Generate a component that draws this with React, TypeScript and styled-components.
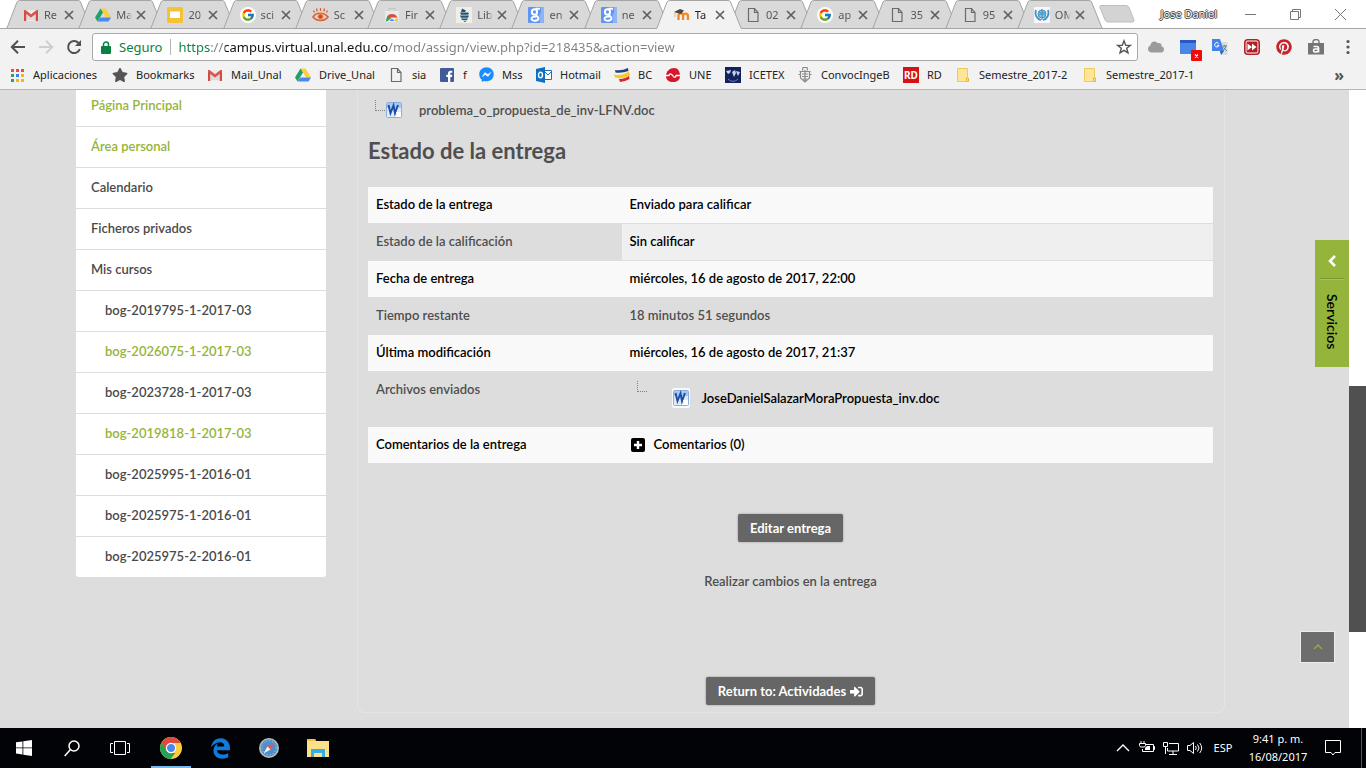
import React from "react";
import styled, { createGlobalStyle } from "styled-components";
import { FcGoogle } from "react-icons/fc";
import { FaCloud, FaFacebookMessenger, FaPinterest, FaSignInAlt, FaStar } from "react-icons/fa";
import { FaEdgeLegacy } from "react-icons/fa6";

const uiFont = `"Noto Sans", "Open Sans", sans-serif`;
const siteFont = `Lato, "Noto Sans", sans-serif`;

const GlobalStyle = createGlobalStyle`
  * { box-sizing: border-box; }
  body { margin: 0; background: #dddddd; font-family: ${uiFont}; }
  button { border: 0; padding: 0; background: none; font: inherit; color: inherit; cursor: pointer; }
  a { color: inherit; text-decoration: none; }
  ul { list-style: none; margin: 0; padding: 0; }
  svg { display: block; flex: none; }
`;

/* ---------- icons ---------- */

const Gmail = ({ s = 16 }: { s?: number }) => (
  <svg width={s} height={s} viewBox="0 0 16 16">
    <path d="M1 3h14v11H1z" fill="#eceaea" />
    <path d="M3 13V6l5 4 5-4v7z" fill="#dcdada" />
    <path d="M1 14V3.600L8 9l7-5.400V14h-2.200V6.800L8 10.600 3.200 6.800V14z" fill="#d64a3f" />
    <path d="M1 3h1.500L8 7.200 13.500 3H15v1.500L8 10 1 4.500z" fill="#d9564b" />
  </svg>
);

const Drive = () => (
  <svg width="16" height="16" viewBox="0 0 16 16">
    <path d="M5.500 1.500h5L16 10.500h-5z" fill="#fccd3d" />
    <path d="M5.500 1.500L0 10.500l2.500 4L8 5.600z" fill="#21a165" />
    <path d="M5.300 10.500H16l-2.500 4h-11z" fill="#4a87ee" />
  </svg>
);

const Slides = () => (
  <svg width="16" height="16" viewBox="0 0 16 16">
    <rect width="16" height="16" rx="1.500" fill="#f5c235" />
    <rect x="3" y="4.500" width="10" height="6.500" fill="#fff" />
  </svg>
);

const GoogleIcon = () => (
  <svg width="16" height="16" viewBox="0 0 16 16">
    <circle cx="8" cy="8" r="8" fill="#fff" />
    <FcGoogle x={1} y={1} width={14} height={14} size={14} />
  </svg>
);

const Eye = () => (
  <svg width="17" height="16" viewBox="0 0 17 16" fill="none" stroke="#d9603b">
    <path d="M1 10c3-5 11-5 15 0-3 4-11 5-15 0z" strokeWidth="1.600" />
    <circle cx="8.500" cy="9.500" r="2.600" fill="#d0492b" stroke="#f2a33c" />
    <path d="M2.500 5.500L1.500 3.500M5.200 4.500L4.500 1.500M8.500 4V1M11.800 4.500l.7-3M14.500 5.500l1-2" strokeWidth="1.300" />
  </svg>
);

const WebStore = () => (
  <svg width="16" height="16" viewBox="0 0 16 16">
    <path d="M5 4V1.500h6V4" fill="none" stroke="#c4c4c4" />
    <path d="M1 4h14v10.500H1z" fill="#e9e9e9" />
    <path d="M2 14.500a6 6 0 0 1 3-5.800L8 12z" fill="#36a852" />
    <path d="M2.600 10.500a6 6 0 0 1 10.800 0z" fill="#dd4b3e" />
    <path d="M13.400 10.500a6 6 0 0 1 .6 4H9z" fill="#fbc831" />
    <path d="M5.200 14.500a2.800 2.800 0 0 1 5.600 0z" fill="#4a87ee" stroke="#fff" strokeWidth=".8" />
  </svg>
);

const Lib = () => (
  <svg width="16" height="16" viewBox="0 0 16 16">
    <rect width="16" height="16" fill="#eef0e6" />
    <path d="M6 1.500l4 2-1 1.500H5zM4 5.500h8l1 1-1 1.200H5zM4 8.500h9l-1 2.200H5zM5 11.500h7l-1 1.500H6zM7 13.700h4l-2 1.300z" fill="#28527e" />
  </svg>
);

const OldGoogle = () => (
  <svg width="16" height="16" viewBox="0 0 16 16">
    <rect width="16" height="16" rx="1" fill="#6095f3" />
    <path d="M13 0v6c-2 1-2 3-1 5v5h2q2 0 2-2V0z" fill="#8fb4f8" />
    <ellipse cx="6.500" cy="5" rx="2.600" ry="2.800" fill="none" stroke="#fff" strokeWidth="2" />
    <path d="M7.500 1.800h4.500M8.200 7.500c-.6 1.500 2.300 1.800 2.300 3.800 0 3.200-7 3.200-7 .4 0-2 3-2.300 5-2" fill="none" stroke="#fff" strokeWidth="1.900" />
  </svg>
);

const Moodle = () => (
  <svg width="17" height="16" viewBox="0 0 17 16" fill="none">
    <path d="M5.500 13V8.500a2.300 2.300 0 0 1 4.600 0V13M10.100 9a2.300 2.300 0 0 1 4.800 0v4" stroke="#f08a2c" strokeWidth="2.400" />
    <path d="M1 5l6-3 4 1.500-3 3.500-4-1z" fill="#4a4744" />
    <path d="M2 5v5" stroke="#d9b27c" />
  </svg>
);

const Page = () => (
  <svg width="16" height="16" viewBox="0 0 16 16" fill="none" stroke="#6b6b6b" strokeWidth="1.200">
    <path d="M3.500 1.500h6l3.500 4v9H3.500z" />
    <path d="M9.500 1.500v4H13" />
  </svg>
);

const Who = () => (
  <svg width="16" height="16" viewBox="0 0 16 16" fill="none" stroke="#3e93c4">
    <rect width="16" height="16" fill="#f7f7f7" stroke="none" />
    <circle cx="8" cy="7" r="4" fill="#8fc3e0" />
    <path d="M8 2v11M5 5l6 3M5 8l6-3" />
    <path d="M2 3c-1.500 5 1 9 5 10M14 3c1.500 5-1 9-5 10" strokeWidth="1.800" />
  </svg>
);

const Apps = () => (
  <svg width="16" height="16" viewBox="0 0 16 16">
    {["#ef4a3c", "#ef4a3c", "#ef4a3c", "#2f9e5a", "#3c80e8", "#f3b51c", "#2f9e5a", "#f3b51c", "#f3b51c"].map((c, i) => (
      <rect key={i} x={2 + (i % 3) * 5} y={2 + Math.floor(i / 3) * 5} width="3" height="3" fill={c} />
    ))}
  </svg>
);

const Facebook = () => (
  <svg width="16" height="16" viewBox="0 0 16 16">
    <rect x="1" y="1" width="14" height="14" rx="1" fill="#3f5b9a" />
    <path d="M9 15V10H7.300V7.800H9V6.400C9 4.600 10 3.700 11.700 3.700h1.600v2.100h-1.100c-.7 0-.9.300-.9.900v1.100h2l-.3 2.200h-1.700v5z" fill="#fff" />
  </svg>
);

const Outlook = () => (
  <svg width="16" height="16" viewBox="0 0 16 16">
    <path d="M8 3.500h7.500v9H8z" fill="#fff" stroke="#1272c4" />
    <path d="M9 5l3 3 3.500-3.500" fill="none" stroke="#1272c4" />
    <path d="M0 2l9-2v16l-9-2z" fill="#0f6fc2" />
    <ellipse cx="4.500" cy="8" rx="2" ry="2.700" fill="none" stroke="#fff" strokeWidth="1.400" />
  </svg>
);

const Flag = () => (
  <svg width="16" height="16" viewBox="0 0 16 16">
    <path d="M1 3q7 1 13-2l.5 3Q8 6.500 1.500 5.500z" fill="#24407f" />
    <path d="M0 7.500q7 2 15-3l1 4q-8 4-15 2z" fill="#fcc81e" />
    <path d="M5 12q6 0 10-3l.5 3q-5 3-9.500 3z" fill="#d6262f" />
  </svg>
);

const Une = () => (
  <svg width="16" height="16" viewBox="0 0 16 16">
    <path d="M1 9c0-5 4-8 8-8 5 0 6 5 6 8 0 4-3 6-7 6s-7-2-7-6z" fill="#d71729" />
    <path d="M0 8.500h4c1-3 3-1 4 .5s3 2 3-.5h4" fill="none" stroke="#fff" strokeWidth="1.300" />
  </svg>
);

const Icetex = () => (
  <svg width="16" height="16" viewBox="0 0 16 16">
    <rect width="16" height="16" fill="#12225e" />
    <path d="M1 4l5-1-1 3-2 1zM7 5l3-2 1 3-2 4zM11 4l4 1-2 4-1-2z" fill="#c9d2ea" />
    <path d="M3 12c3 3 7 3 10 0" stroke="#7182bb" fill="none" />
  </svg>
);

const Crest = () => (
  <svg width="16" height="16" viewBox="0 0 16 16" fill="none" stroke="#8a8a8a">
    <path d="M5.500 3.500L6 .5h4l.5 3M2.500 4.500h11M3.500 5v6L8 15l4.500-4V5M5 7h6M5 9.500h6M6 12h4M8 3v12M1.500 7.500h2M12.500 7.500h2" strokeWidth="1.200" />
  </svg>
);

const Folder = () => (
  <svg width="16" height="16" viewBox="0 0 16 16">
    <path d="M2.500 1.500h10v13h-10z" fill="#ffe596" stroke="#eccb5a" />
    <path d="M11.500 11h2v3.500h-2z" fill="#ffe596" stroke="#e4b93b" />
  </svg>
);

const Rd = styled.span`
  width: 16px;
  height: 16px;
  background: #d31414;
  color: #fff;
  font: 700 10px/16px ${uiFont};
  text-align: center;
`;

const WordDoc = () => (
  <svg width="16" height="16" viewBox="0 0 16 16">
    <rect x=".5" y=".5" width="15" height="15" rx="1" fill="#dfeafb" stroke="#8aaee0" />
    <path d="M1 1h14v5H1z" fill="#a9c8f2" />
    <path d="M2.500 3l2 8 3-7.500 1.500 7.500 3-8" fill="none" stroke="#1d4fa8" strokeWidth="2" />
    <path d="M10 10h5v5H9c3-1 2-3 1-5z" fill="#fff" />
  </svg>
);

const Tree = () => (
  <svg width="11" height="12" viewBox="0 0 11 12" fill="none" stroke="#808080" strokeDasharray="1 1">
    <path d="M.5 0v11M1 10.500h10" />
  </svg>
);

/* ---------- browser chrome ---------- */

const Screen = styled.div`
  display: flex;
  flex-direction: column;
  min-height: 100vh;
`;

const TabStrip = styled.header`
  display: flex;
  align-items: stretch;
  height: 29px;
  padding-left: 6px;
  background: #fff;
  border-bottom: 1px solid #a5a5a5;
`;

const Tabs = styled.div`
  display: flex;
  flex: 0 1 1083px;
`;

const TabButton = styled.button<{ $active?: boolean }>`
  position: relative;
  z-index: ${(p) => (p.$active ? 2 : 1)};
  flex: 1 1 0;
  min-width: 0;
  display: flex;
  align-items: center;
  padding-left: 17px;
  margin-bottom: -1px;
  color: ${(p) => (p.$active ? "#222" : "#555")};
  text-align: left;
`;

const TabShape = styled.svg`
  position: absolute;
  left: 0;
  top: 0;
  z-index: -1;
`;

const TabTitle = styled.span`
  width: 16px;
  margin: 0 4px 0 5px;
  overflow: hidden;
  white-space: nowrap;
  font-size: 11px;
  line-height: 16px;
  mask-image: linear-gradient(90deg, #000 11px, transparent 16px);
`;

const Cross = () => (
  <svg width="10" height="10" viewBox="0 0 10 10" stroke="#5f5f5f" strokeWidth="1.700">
    <path d="M1 1l8 8M9 1L1 9" />
  </svg>
);

const Tab = ({ icon, title, active }: { icon: React.ReactNode; title: string; active?: boolean }) => (
  <TabButton $active={active}>
    <TabShape width="86" height="29" viewBox="0 0 86 29">
      <path d="M0 29L1 28 11 2Q12 .5 13.500 .5H72Q74 .5 74.500 2L85 28 86 29z" fill={active ? "#f2f2f2" : "#d9d9d9"} />
      <path d="M0 28.500L1 28 11 2Q12 .5 13.500 .5H72Q74 .5 74.500 2L85 28 86 28.500" fill="none" stroke="#a5a5a5" />
      {!active && <path d="M0 28.500h86" stroke="#a5a5a5" />}
    </TabShape>
    {icon}
    <TabTitle>{title}</TabTitle>
    <Cross />
  </TabButton>
);

const NewTab = styled.button`
  align-self: center;
  margin-left: 10px;
`;

const WindowControls = styled.div`
  display: flex;
  align-items: center;
  margin-left: auto;
  padding-right: 20px;
  gap: 34px;
`;

const Profile = styled.button`
  color: #fff;
  font-family: "Open Sans", sans-serif;
  font-size: 11px;
  line-height: 16px;
  margin-right: -6px;
  white-space: nowrap;
  text-shadow: 1px 0 #444, -1px 0 #444, 0 1px #444, 0 -1px #444;
`;

const Toolbar = styled.div`
  display: flex;
  align-items: center;
  height: 33px;
  padding: 3px 10px 0;
  background: #f2f2f2;
`;

const NavButtons = styled.div`
  display: flex;
  gap: 12px;
  width: 82px;
`;

const Omnibox = styled.form`
  flex: 1;
  display: flex;
  align-items: center;
  height: 28px;
  padding: 0 5px 0 8px;
  background: #fff;
  border: 1px solid #a9a9a9;
  border-radius: 3px;
`;

const Secure = styled.label`
  display: flex;
  align-items: center;
  gap: 8px;
  color: #0b8043;
  font-size: 13px;
  line-height: 20px;
  padding-right: 8px;
`;

const UrlDivider = styled.span`
  width: 1px;
  height: 16px;
  background: #b5b5b5;
`;

const Url = styled.input`
  flex: 1;
  min-width: 0;
  border: 0;
  outline: 0;
  padding: 0;
  margin-left: 7px;
  height: 24px;
  font: 13px/20px ${uiFont};
  color: #444;
  -webkit-text-fill-color: transparent;
  background: linear-gradient(90deg, #0b8043 33px, #808080 33px 47px, #111 47px 210px, #808080 210px);
  background-clip: text;
`;

const Extensions = styled.div`
  display: flex;
  align-items: center;
  gap: 16px;
  margin-left: 10px;
`;

const BookmarkBar = styled.nav`
  display: flex;
  align-items: center;
  height: 28px;
  padding: 0 22px 2px 9px;
  background: #f2f2f2;
  border-bottom: 1px solid #b6b6b6;
`;

const BookmarkLink = styled.a<{ $w: number }>`
  flex: 0 0 ${(p) => p.$w}px;
  display: flex;
  align-items: center;
  gap: 8px;
  color: #222;
  font-size: 11px;
  line-height: 16px;
  white-space: nowrap;
`;

const More = styled.button`
  margin-left: auto;
  font-size: 16px;
  font-weight: 700;
  line-height: 16px;
  color: #555;
`;

/* ---------- site ---------- */

const Viewport = styled.div`
  flex: 1;
  display: flex;
`;

const Site = styled.div`
  position: relative;
  flex: 1;
  display: flex;
  align-items: flex-start;
  gap: 31px;
  padding: 0 124px 15px 76px;
  overflow: hidden;
  background: #dddddd;
  color: #4f4f4f;
  font: 600 13px/20px ${siteFont};
`;

const SideNav = styled.nav`
  flex: 0 0 250px;
  margin-top: -5px;
  background: #fff;
  border-radius: 0 0 3px 3px;
`;

const SideItem = styled.li<{ $sub?: boolean; $green?: boolean }>`
  height: 41px;
  padding: 9px 15px 0 ${(p) => (p.$sub ? 29 : 15)}px;
  border-top: 1px solid #dddddd;
  color: ${(p) => (p.$green ? "#94b43b" : "#4a4a4a")};
`;

const Panel = styled.main`
  flex: 1;
  min-width: 0;
  padding: 0 11px 7px 10px;
  border: 1px solid #e4e4e4;
  border-top: 0;
  border-radius: 0 0 8px 8px;
  display: flex;
  flex-direction: column;
`;

const FileRow = styled.div`
  display: flex;
  align-items: center;
  padding: 10px 0 0 7px;
  a { margin-left: 17px; }
`;

const TreeSlot = styled.span`
  align-self: flex-start;
`;

const Heading = styled.h3`
  margin: 15px 0 20px;
  font-size: 22px;
  line-height: 32px;
  font-weight: 700;
`;

const StatusTable = styled.table`
  width: 100%;
  border-collapse: separate;
  border-spacing: 0;
  th, td {
    padding: 7px 8px 9px;
    text-align: left;
    vertical-align: top;
    font-weight: 600;
  }
  th { width: 30%; }
  tr + tr > th, tr + tr > td { border-top: 1px solid #dddddd; }
`;

const Row = styled.tr<{ $light?: boolean; $graded?: boolean }>`
  color: ${(p) => (p.$light ? "#000" : "#4f4f4f")};
  background: ${(p) => (p.$light ? "#f9f9f9" : "transparent")};
  td {
    background: ${(p) => (p.$graded ? "#efefef" : "transparent")};
    color: ${(p) => (p.$graded ? "#000" : "inherit")};
  }
`;

const Submission = styled.div`
  display: flex;
  align-items: flex-start;
  height: 38px;
  padding: 2px 0 0 7px;
`;

const SubmittedFile = styled.a`
  display: flex;
  align-items: center;
  gap: 12px;
  margin: 7px 0 0 24px;
  color: #000;
`;

const DocFrame = styled.span`
  padding: 2px 1px;
  background: #f9f9f9;
  border-radius: 2px;
`;

const Comments = styled.a`
  display: flex;
  align-items: center;
  gap: 8px;
`;

const Actions = styled.div`
  display: flex;
  flex-direction: column;
  align-items: center;
  padding-top: 51px;
  p { margin: 29px 0 86px; }
`;

const DarkButton = styled.button`
  display: flex;
  align-items: center;
  gap: 4px;
  height: 28px;
  padding: 0 12px;
  border-radius: 2px;
  background: #666;
  color: #fff;
  font-weight: 700;
  box-shadow: 0 0 2px rgba(0, 0, 0, 0.4);
`;

const ServiceTab = styled.button`
  position: absolute;
  right: 0;
  top: 150px;
  width: 34px;
  height: 127px;
  display: flex;
  flex-direction: column;
  align-items: center;
  padding-top: 15px;
  background: #94b43b;
  color: #000;
`;

const ServiceRule = styled.span`
  width: 24px;
  height: 2px;
  margin: 11px 0 14px;
  background: #7c9733;
  border-bottom: 1px solid #a9c45c;
`;

const ServiceName = styled.span`
  writing-mode: vertical-rl;
  font: 600 14px/20px ${siteFont};
`;

const BackToTop = styled.button`
  position: absolute;
  right: 14px;
  bottom: 65px;
  width: 35px;
  height: 32px;
  display: grid;
  place-items: center;
  background: #6d6d6d;
  border: 1px solid #ececec;
`;

const ScrollTrack = styled.div`
  flex: 0 0 17px;
  display: flex;
  flex-direction: column;
  background: #fff;
  &::before { content: ""; flex: 296; }
  &::after { content: ""; flex: 96; }
`;

const ScrollThumb = styled.div`
  flex: 246;
  background: #505050;
`;

/* ---------- taskbar ---------- */

const Taskbar = styled.footer`
  display: flex;
  height: 40px;
  background: #010306;
  color: #fff;
  font-size: 11px;
  line-height: 18px;
`;

const TaskButton = styled.button`
  width: 48px;
  display: grid;
  place-items: center;
`;

const PinnedApps = styled.div`
  display: flex;
  gap: 9px;
  margin-left: 7px;
  ${TaskButton} { width: 40px; }
  ${TaskButton}:first-child { border-bottom: 2px solid #76b9ed; padding-top: 2px; }
`;

const Tray = styled.div`
  display: flex;
  align-items: center;
  margin-left: auto;
  padding-right: 4px;
  gap: 8px;
`;

const Clock = styled.time`
  width: 70px;
  text-align: center;
  white-space: nowrap;
`;

const Language = styled.button`
  width: 24px;
  text-align: center;
`;

const Notifications = styled.button`
  padding: 0 20px 0 4px;
  height: 40px;
  border-right: 1px solid #555;
`;

/* ---------- data ---------- */

const tabs = [
  { icon: <Gmail />, title: "Re" },
  { icon: <Drive />, title: "Ma" },
  { icon: <Slides />, title: "20" },
  { icon: <GoogleIcon />, title: "sci" },
  { icon: <Eye />, title: "Sc" },
  { icon: <WebStore />, title: "Fir" },
  { icon: <Lib />, title: "Lib" },
  { icon: <OldGoogle />, title: "en" },
  { icon: <OldGoogle />, title: "ne" },
  { icon: <Moodle />, title: "Ta", active: true },
  { icon: <Page />, title: "02" },
  { icon: <GoogleIcon />, title: "ap" },
  { icon: <Page />, title: "35" },
  { icon: <Page />, title: "95" },
  { icon: <Who />, title: "OM" },
];

const bookmarks: [React.ReactNode, string, number][] = [
  [<Apps />, "Aplicaciones", 103],
  [<FaStar size={16} color="#555" />, "Bookmarks", 95],
  [<Gmail />, "Mail_Unal", 88],
  [<Drive />, "Drive_Unal", 93],
  [<Page />, "sia", 51],
  [<Facebook />, "f", 40],
  [<FaFacebookMessenger size={15} color="#1a8cff" />, "Mss", 57],
  [<Outlook />, "Hotmail", 78],
  [<Flag />, "BC", 51],
  [<Une />, "UNE", 60],
  [<Icetex />, "ICETEX", 72],
  [<Crest />, "ConvocIngeB", 106],
  [<Rd>RD</Rd>, "RD", 52],
  [<Folder />, "Semestre_2017-2", 127],
  [<Folder />, "Semestre_2017-1", 120],
];

const sideItems: { text: string; sub?: boolean; green?: boolean }[] = [
  { text: "Página Principal", green: true },
  { text: "Área personal", green: true },
  { text: "Calendario" },
  { text: "Ficheros privados" },
  { text: "Mis cursos" },
  { text: "bog-2019795-1-2017-03", sub: true },
  { text: "bog-2026075-1-2017-03", sub: true, green: true },
  { text: "bog-2023728-1-2017-03", sub: true },
  { text: "bog-2019818-1-2017-03", sub: true, green: true },
  { text: "bog-2025995-1-2016-01", sub: true },
  { text: "bog-2025975-1-2016-01", sub: true },
  { text: "bog-2025975-2-2016-01", sub: true },
];

export default function App() {
  return (
    <Screen>
      <GlobalStyle />
      <TabStrip>
        <Tabs>
          {tabs.map((t, i) => (
            <Tab key={i} {...t} />
          ))}
        </Tabs>
        <NewTab aria-label="Nueva pestaña">
          <svg width="36" height="18" viewBox="0 0 36 18">
            <path d="M2 .5h25q2 0 3 2L35 15q.5 2-1.500 2H9q-2 0-3-2L1 2.500Q.5 .5 2 .5z" fill="#d3d3d3" stroke="#bdbdbd" />
          </svg>
        </NewTab>
        <WindowControls>
          <Profile>Jose Daniel</Profile>
          <button aria-label="Minimizar">
            <svg width="11" height="11" viewBox="0 0 11 11" stroke="#777"><path d="M0 5.500h11" /></svg>
          </button>
          <button aria-label="Restaurar">
            <svg width="11" height="11" viewBox="0 0 11 11" stroke="#777" fill="none">
              <path d="M.5 2.500h8v8h-8zM2.500 2.500v-2h8v8h-2" />
            </svg>
          </button>
          <button aria-label="Cerrar">
            <svg width="11" height="11" viewBox="0 0 11 11" stroke="#777"><path d="M0 0l11 11M11 0L0 11" /></svg>
          </button>
        </WindowControls>
      </TabStrip>
      <Toolbar>
        <NavButtons>
          <button aria-label="Atrás">
            <svg width="16" height="16" viewBox="0 0 16 16" fill="none" stroke="#505050" strokeWidth="2">
              <path d="M15 8H2.500M8 1.800L1.800 8 8 14.200" />
            </svg>
          </button>
          <button aria-label="Adelante">
            <svg width="16" height="16" viewBox="0 0 16 16" fill="none" stroke="#cfcfcf" strokeWidth="2">
              <path d="M1 8h12.500M8 1.800L14.200 8 8 14.200" />
            </svg>
          </button>
          <button aria-label="Recargar">
            <svg width="16" height="16" viewBox="0 0 16 16" fill="none" stroke="#505050" strokeWidth="2">
              <path d="M13.800 10A6 6 0 1 1 12.500 4L14 5.500" />
              <path d="M15 1v6H9z" fill="#505050" stroke="none" />
            </svg>
          </button>
        </NavButtons>
        <Omnibox>
          <Secure htmlFor="url">
            <svg width="10" height="13" viewBox="0 0 10 13">
              <path d="M1 5h8q1 0 1 1v6q0 1-1 1H1q-1 0-1-1V6q0-1 1-1z" fill="#0b8043" />
              <path d="M2.500 6V3.500a2.500 2.500 0 0 1 5 0V6" fill="none" stroke="#0b8043" strokeWidth="1.500" />
            </svg>
            Seguro
          </Secure>
          <UrlDivider />
          <Url id="url" defaultValue="https://campus.virtual.unal.edu.co/mod/assign/view.php?id=218435&action=view" />
          <button type="button" aria-label="Añadir a marcadores">
            <svg width="16" height="16" viewBox="0 0 16 16" fill="none" stroke="#555" strokeWidth="1.400">
              <path d="M8 1.800l1.700 4.400 4.700.2-3.700 2.900 1.300 4.600L8 11.300l-4 2.600 1.300-4.600L1.600 6.400l4.700-.2z" />
            </svg>
          </button>
        </Omnibox>
        <Extensions>
          <button aria-label="Nube"><FaCloud size={16} color="#9b9b9b" /></button>
          <button aria-label="Ventana">
            <svg width="16" height="16" viewBox="0 0 16 16" overflow="visible">
              <path d="M0 1h16v4H0z" fill="#2a56c6" />
              <path d="M0 4h16v11H0z" fill="#4a86e8" />
              <rect x="11" y="11" width="11" height="11" rx="1" fill="#f00b0b" />
              <path d="M15 15.500l3 3M18 15.500l-3 3" stroke="#fff" strokeWidth="1.200" />
            </svg>
          </button>
          <button aria-label="Traductor">
            <svg width="16" height="16" viewBox="0 0 16 16">
              <path d="M6 3h9.500v13H9z" fill="#dcdcdc" />
              <path d="M0 0h8l4 12H0z" fill="#4483ec" />
              <path d="M8 12h4l-3 4z" fill="#2b5cbf" />
              <path d="M6.500 4.300a2.200 2.200 0 1 0 .5 2H5" fill="none" stroke="#fff" />
              <path d="M10.500 7H15M12.700 6v1.500M14 7.500l-2.700 4M11.500 8.500l3.500 3.500" fill="none" stroke="#5f7f8c" />
            </svg>
          </button>
          <button aria-label="Video">
            <svg width="16" height="16" viewBox="0 0 16 16">
              <rect x=".8" y=".8" width="14.400" height="14.400" rx="3" fill="#fff" stroke="#b02025" strokeWidth="1.600" />
              <rect x="2.500" y="2.500" width="11" height="11" rx="1" fill="#b02025" />
              <path d="M3.500 4.500L8 8l-4.500 3.500zM8 4.500L12.500 8 8 11.500z" fill="#fff" />
            </svg>
          </button>
          <button aria-label="Pinterest"><FaPinterest size={16} color="#c8232c" /></button>
          <button aria-label="Tienda">
            <svg width="16" height="16" viewBox="0 0 16 16">
              <path d="M0 4h16v11.500H0z" fill="#757575" />
              <path d="M5 5V2.500a3 2 0 0 1 6 0V5" fill="none" stroke="#757575" strokeWidth="1.400" />
              <path d="M5.500 7.500h3.500q1.500 0 1.500 1.500v4.500M10.500 10H7q-1.500 0-1.500 1.500T7 13q3 0 3.500-1.500" fill="none" stroke="#fff" strokeWidth="1.700" />
            </svg>
          </button>
          <button aria-label="Menú">
            <svg width="16" height="16" viewBox="0 0 16 16" fill="#555">
              <circle cx="8" cy="2.500" r="1.600" /><circle cx="8" cy="8" r="1.600" /><circle cx="8" cy="13.500" r="1.600" />
            </svg>
          </button>
        </Extensions>
      </Toolbar>
      <BookmarkBar>
        {bookmarks.map(([icon, text, w]) => (
          <BookmarkLink href="#" key={text} $w={w}>
            {icon}
            <span>{text}</span>
          </BookmarkLink>
        ))}
        <More>»</More>
      </BookmarkBar>

      <Viewport>
        <Site>
          <SideNav>
            <ul>
              {sideItems.map((s) => (
                <SideItem key={s.text} $sub={s.sub} $green={s.green}>
                  <a href="#">{s.text}</a>
                </SideItem>
              ))}
            </ul>
          </SideNav>
          <Panel>
            <FileRow>
              <TreeSlot><Tree /></TreeSlot>
              <WordDoc />
              <a href="#">problema_o_propuesta_de_inv-LFNV.doc</a>
            </FileRow>
            <Heading>Estado de la entrega</Heading>
            <StatusTable>
              <tbody>
                <Row $light><th scope="row">Estado de la entrega</th><td>Enviado para calificar</td></Row>
                <Row $graded><th scope="row">Estado de la calificación</th><td>Sin calificar</td></Row>
                <Row $light><th scope="row">Fecha de entrega</th><td>miércoles, 16 de agosto de 2017, 22:00</td></Row>
                <Row><th scope="row">Tiempo restante</th><td>18 minutos 51 segundos</td></Row>
                <Row $light><th scope="row">Última modificación</th><td>miércoles, 16 de agosto de 2017, 21:37</td></Row>
                <Row>
                  <th scope="row">Archivos enviados</th>
                  <td>
                    <Submission>
                      <TreeSlot><Tree /></TreeSlot>
                      <SubmittedFile href="#">
                        <DocFrame><WordDoc /></DocFrame>
                        JoseDanielSalazarMoraPropuesta_inv.doc
                      </SubmittedFile>
                    </Submission>
                  </td>
                </Row>
                <Row $light>
                  <th scope="row">Comentarios de la entrega</th>
                  <td>
                    <Comments href="#">
                      <svg width="16" height="16" viewBox="0 0 16 16">
                        <rect x="1" y="2" width="14" height="14" rx="2" fill="#000" />
                        <path d="M8 5v8M4 9h8" stroke="#fff" strokeWidth="2.400" />
                      </svg>
                      Comentarios (0)
                    </Comments>
                  </td>
                </Row>
              </tbody>
            </StatusTable>
            <Actions>
              <DarkButton>Editar entrega</DarkButton>
              <p>Realizar cambios en la entrega</p>
              <DarkButton>Return to: Actividades <FaSignInAlt size={13} /></DarkButton>
            </Actions>
          </Panel>
          <ServiceTab>
            <svg width="8" height="12" viewBox="0 0 8 12" fill="none" stroke="#fff" strokeWidth="2.600">
              <path d="M7 1L2 6l5 5" />
            </svg>
            <ServiceRule />
            <ServiceName>Servicios</ServiceName>
          </ServiceTab>
          <BackToTop aria-label="Subir">
            <svg width="10" height="6" viewBox="0 0 10 6" fill="none" stroke="#8fb03a" strokeWidth="1.400">
              <path d="M1 5l4-4 4 4" />
            </svg>
          </BackToTop>
        </Site>
        <ScrollTrack><ScrollThumb /></ScrollTrack>
      </Viewport>

      <Taskbar>
        <TaskButton aria-label="Inicio">
          <svg width="16" height="16" viewBox="0 0 16 16" fill="#fff">
            <path d="M0 2.300l6.500-.9v6.100H0zM7.300 1.300L16 0v7.500H7.300zM0 8.300h6.500v6.200L0 13.600zM7.300 8.300H16V16l-8.700-1.300z" />
          </svg>
        </TaskButton>
        <TaskButton aria-label="Buscar">
          <svg width="16" height="17" viewBox="0 0 16 17" fill="none" stroke="#fff" strokeWidth="1.500">
            <circle cx="10" cy="6" r="5" /><path d="M6.500 9.500L.7 16" />
          </svg>
        </TaskButton>
        <TaskButton aria-label="Vista de tareas">
          <svg width="20" height="14" viewBox="0 0 20 14" fill="none" stroke="#fff">
            <path d="M4.500 .5h11v13h-11zM3 2.500H.5v9H3M17 2.500h2.500v9H17" />
          </svg>
        </TaskButton>
        <PinnedApps>
          <TaskButton aria-label="Chrome">
            <svg width="22" height="22" viewBox="0 0 22 22">
              <circle cx="11" cy="11" r="11" fill="#fcce3a" />
              <path d="M1.500 5.500A11 11 0 0 1 20.500 5.500L20.600 6H11l-5 8z" fill="#df4a3f" />
              <path d="M1.500 5.500l4.900 8.200L11 16h4.300L10.500 22A11 11 0 0 1 1.500 5.500z" fill="#24a15a" />
              <circle cx="11" cy="11" r="4.600" fill="#4a87ee" stroke="#fff" strokeWidth="1.200" />
            </svg>
          </TaskButton>
          <TaskButton aria-label="Edge"><FaEdgeLegacy size={21} color="#0f7bdc" /></TaskButton>
          <TaskButton aria-label="Safari">
            <svg width="20" height="20" viewBox="0 0 20 20">
              <circle cx="10" cy="10" r="9.200" fill="#4f8fc9" stroke="#b9bcc0" strokeWidth="1.600" />
              <circle cx="10" cy="10" r="7" fill="none" stroke="#a9d2f0" strokeDasharray="1 2" />
              <path d="M15.500 4.500l-4 7-3-3z" fill="#e2574c" />
              <path d="M4.500 15.500l4-7 3 3z" fill="#f2f2f2" />
            </svg>
          </TaskButton>
          <TaskButton aria-label="Explorador">
            <svg width="22" height="18" viewBox="0 0 22 18">
              <path d="M0 0h8l1 2h13v16H0z" fill="#ffe08a" />
              <path d="M0 0h8l1 2H0z" fill="#f5c043" />
              <path d="M4 10h14v8h-3v-4H7v4H4z" fill="#35aee0" />
            </svg>
          </TaskButton>
        </PinnedApps>
        <Tray>
          <svg width="16" height="16" viewBox="0 0 16 16" fill="none" stroke="#fff" strokeWidth="1.400"><path d="M2 11l6-6 6 6" /></svg>
          <svg width="16" height="16" viewBox="0 0 16 16" fill="none" stroke="#fff">
            <path d="M6 4.500h8.500v7H3.500V9M14.500 6.500h1v3h-1M2 1v2.500M5 1v2.500M.5 3.500h6v2l-1 1.500h-4l-1-1.500z" />
            <path d="M8 6h3v4H6V8z" fill="#fff" stroke="none" />
          </svg>
          <svg width="16" height="16" viewBox="0 0 16 16" fill="none" stroke="#fff">
            <path d="M6 3.500h9.500v7.500H4.500V8M10 11v3M6 14.500h8M.5 2.500h4v4h-4zM2.500 6.500v7.500" />
          </svg>
          <svg width="16" height="16" viewBox="0 0 16 16" fill="none" stroke="#fff">
            <path d="M.5 5.500H3l3.500-3v11L3 10.500H.5zM8.500 6q1.500 2 0 4M10.500 4.500q3 3.500 0 7M12.700 3q4 5 0 10" />
          </svg>
          <Language>ESP</Language>
          <Clock>9:41 p. m.<br />16/08/2017</Clock>
          <Notifications aria-label="Notificaciones">
            <svg width="16" height="16" viewBox="0 0 16 16" fill="none" stroke="#fff"><path d="M.5 .5h15v12H10l-2 2.500-2-2.500H.5z" /></svg>
          </Notifications>
        </Tray>
      </Taskbar>
    </Screen>
  );
}
